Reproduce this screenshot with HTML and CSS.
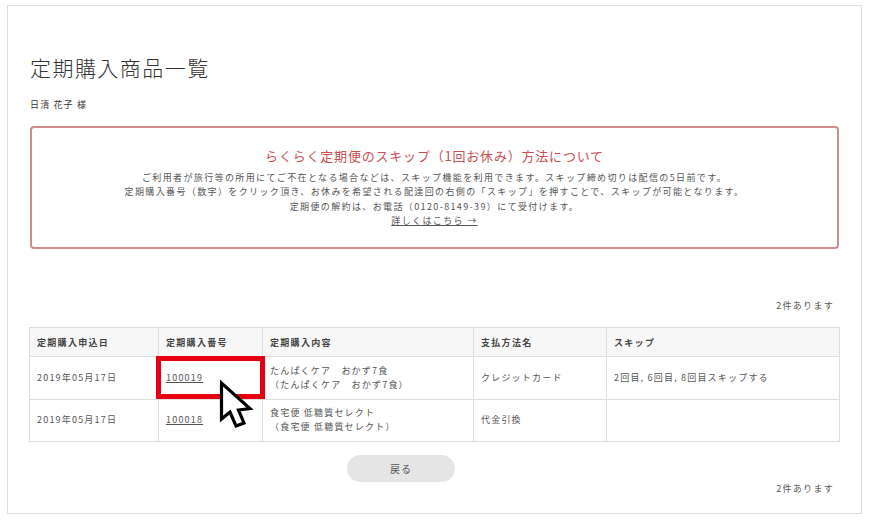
FILE: index.html
```html
<!DOCTYPE html>
<html lang="ja">
<head>
<meta charset="utf-8">
<title>定期購入商品一覧</title>
<link rel="stylesheet" href="styles.css">
</head>
<body>
<main class="panel">
  <h1 class="title">定期購入商品一覧</h1>
  <p class="customer">日清 花子 様</p>
  <section class="notice">
    <h2 class="notice-title">らくらく定期便のスキップ（1回お休み）方法について</h2>
    <p class="notice-line">ご利用者が旅行等の所用にてご不在となる場合などは、スキップ機能を利用できます。スキップ締め切りは配信の5日前です。</p>
    <p class="notice-line">定期購入番号（数字）をクリック頂き、お休みを希望される配達回の右側の「スキップ」を押すことで、スキップが可能となります。</p>
    <p class="notice-line">定期便の解約は、お電話（0120-8149-39）にて受付けます。</p>
    <p class="notice-line"><a class="link" href="#">詳しくはこちら →</a></p>
  </section>
  <p class="count count-top">2件あります</p>
  <div class="table-wrap">
    <table class="orders">
      <colgroup>
        <col class="c1"><col class="c2"><col class="c3"><col class="c4"><col class="c5">
      </colgroup>
      <thead>
        <tr><th>定期購入申込日</th><th>定期購入番号</th><th>定期購入内容</th><th>支払方法名</th><th>スキップ</th></tr>
      </thead>
      <tbody>
        <tr>
          <td>2019年05月17日</td>
          <td><a class="link" href="#">100019</a></td>
          <td>たんぱくケア　おかず7食<br>（たんぱくケア　おかず7食）</td>
          <td>クレジットカード</td>
          <td>2回目, 6回目, 8回目スキップする</td>
        </tr>
        <tr>
          <td>2019年05月17日</td>
          <td><a class="link" href="#">100018</a></td>
          <td>食宅便 低糖質セレクト<br>（食宅便 低糖質セレクト）</td>
          <td>代金引換</td>
          <td></td>
        </tr>
      </tbody>
    </table>
    <div class="highlight"></div>
    <svg class="cursor" viewBox="0 0 36 53" width="36" height="53" aria-hidden="true">
      <path d="M3.5 6 L3.5 42 L12 35 L18 49 L26 46 L20.5 33 L32 31.5 Z" fill="#fff" stroke="#000" stroke-width="3.2" stroke-linejoin="miter"/>
    </svg>
  </div>
  <div class="actions"><a class="back" href="#">戻る</a></div>
  <p class="count count-bottom">2件あります</p>
</main>
</body>
</html>
```
FILE: styles.css
```css
* { box-sizing: border-box; }
html, body { margin: 0; padding: 0; background: #fff; }
body {
  width: 880px;
  height: 523px;
  overflow: hidden;
  font-family: "Noto Sans CJK JP", "Noto Sans", sans-serif;
  color: #555;
  font-size: 9px;
}
.panel {
  width: 855px;
  height: 509px;
  margin: 5px 0 0 7px;
  border: 1px solid #ddd;
  padding: 0 22px;
}
.title {
  margin: 45px 0 0;
  height: 32px;
  font-size: 21px;
  line-height: 32px;
  font-weight: 300;
  letter-spacing: 1.45px;
  color: #333;
}
.customer {
  margin: 15px 0 0;
  font-size: 9px;
  line-height: 14px;
  letter-spacing: 1.15px;
  color: #333;
}
.notice {
  margin-top: 14px;
  width: 809px;
  height: 123px;
  border: 2px solid #cf8c8c;
  border-radius: 4px;
  padding: 18px 0 0;
  text-align: center;
}
.notice-title {
  margin: 0 0 5px;
  font-size: 13px;
  line-height: 20px;
  font-weight: 400;
  letter-spacing: 0.8px;
  color: #c9504f;
}
.notice-line {
  margin: 0;
  font-size: 9px;
  line-height: 14.4px;
  letter-spacing: 1.37px;
  color: #555;
}
.link { color: #555; text-decoration: underline; }
.count {
  margin: 0;
  padding-right: 5px;
  text-align: right;
  font-size: 9px;
  line-height: 14px;
  letter-spacing: 1.3px;
  color: #555;
}
.count-top { margin-top: 50px; }
.table-wrap { position: relative; margin: 14px 0 0 -1px; width: 810px; }
.orders {
  width: 810px;
  border-collapse: collapse;
  table-layout: fixed;
  font-size: 9px;
  letter-spacing: 1.2px;
}
.c1 { width: 129px; }
.c2 { width: 104px; }
.c3 { width: 211px; }
.c4 { width: 133px; }
.c5 { width: 233px; }
.orders th, .orders td {
  border: 1px solid #ddd;
  padding: 0 7px;
  text-align: left;
  vertical-align: middle;
}
.orders th {
  height: 29px;
  background: #f7f7f7;
  font-weight: 700;
  letter-spacing: 1.3px;
  color: #444;
}
.orders td { height: 42.5px; line-height: 14px; color: #555; }
.highlight {
  position: absolute;
  left: 127px;
  top: 29px;
  width: 109px;
  height: 43px;
  border: 5px solid #e60012;
}
.cursor {
  position: absolute;
  left: 189px;
  top: 50px;
}
.actions { margin-top: 13px; padding-left: 317px; }
.back {
  display: block;
  width: 108px;
  height: 27px;
  border-radius: 14px;
  background: #e5e5e5;
  text-align: center;
  font-size: 10px;
  line-height: 27px;
  letter-spacing: 1px;
  color: #555;
  text-decoration: none;
}
.count-bottom { margin-top: 0; }
```
